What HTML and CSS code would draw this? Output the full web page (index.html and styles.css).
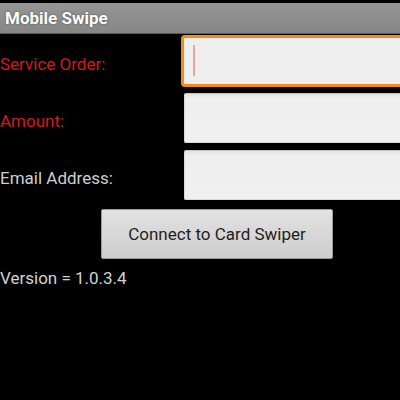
FILE: index.html
```
<!DOCTYPE html>
<html lang="en">
<head>
    <meta charset="UTF-8">
    <meta name="viewport" content="width=device-width, initial-scale=1.0">
    <title>Mobile Swipe</title>
    <link rel="stylesheet" href="styles.css">
</head>
<body>
    <div class="title-bar">Mobile Swipe</div>

    <div class="form">
        <!-- Service order (focused) -->
        <div class="label required">Service Order:</div>
        <div class="field focused">
            <input type="text" class="text-input" id="serviceOrder">
            <span class="caret"></span>
        </div>

        <div class="label required">Amount:</div>
        <div class="field">
            <input type="text" class="text-input" id="amount">
        </div>

        <div class="label">Email Address:</div>
        <div class="field">
            <input type="email" class="text-input" id="email">
        </div>
    </div>

    <div class="actions">
        <button class="button" id="connect">Connect to Card Swiper</button>
    </div>

    <div class="version">Version = 1.0.3.4</div>
</body>
</html>
```

FILE: styles.css
```
html {
    overflow: hidden;
}
body {
    margin: 0;
    width: 400px;
    height: 400px;
    background-color: #000;
    font-family: Roboto, "Liberation Sans", sans-serif;
    color: #cfcfcf;
}
.title-bar {
    margin-top: 3px;
    height: 30px;
    line-height: 30px;
    padding-left: 5px;
    background: linear-gradient(#959595, #868686);
    border-bottom: 1px solid #5a5a5a;
    color: #fff;
    font-size: 17px;
    font-weight: bold;
    text-shadow: 0 0 2px rgba(0, 0, 0, 0.5);
}
.form {
    display: grid;
    grid-template-columns: 184px 216px;
    grid-auto-rows: 50px;
    row-gap: 7px;
    margin-top: 2px;
}
.label {
    display: flex;
    align-items: center;
    padding-top: 5px;
    font-size: 17px;
}
.required {
    color: #d41a1a;
}
.field {
    position: relative;
}
/* boxes run off the right edge, so no right border */
.text-input {
    display: block;
    box-sizing: border-box;
    width: 100%;
    height: 100%;
    margin: 0;
    padding: 0 10px;
    border: 1px solid #d8d8d8;
    border-top-color: #c4c4c4;
    border-right: none;
    border-radius: 2px 0 0 2px;
    background: linear-gradient(#e4e4e4, #efefef 5px, #f0f0f0);
    font-family: inherit;
    font-size: 17px;
    outline: none;
}
.focused .text-input {
    margin: -1px 0 0 -3px;
    width: calc(100% + 3px);
    height: 52px;
    border: 3px solid #f98b10;
    border-right: none;
    border-radius: 4px 0 0 4px;
    background: #efefef;
}
/* text cursor in the focused box */
.caret {
    position: absolute;
    left: 9px;
    top: 9px;
    width: 2px;
    height: 31px;
    background-color: #eaa5a5;
}
.actions {
    padding: 9px 0 0 101px;
}
.button {
    width: 232px;
    height: 50px;
    margin: 0;
    border: 1px solid #9a9a9a;
    border-radius: 2px;
    background: linear-gradient(#e2e2e2, #cdcdcd);
    color: #1e1e1e;
    font-family: inherit;
    font-size: 17px;
    cursor: pointer;
}
.version {
    margin-top: 9px;
    font-size: 17px;
    color: #d2d2d2;
}
```
